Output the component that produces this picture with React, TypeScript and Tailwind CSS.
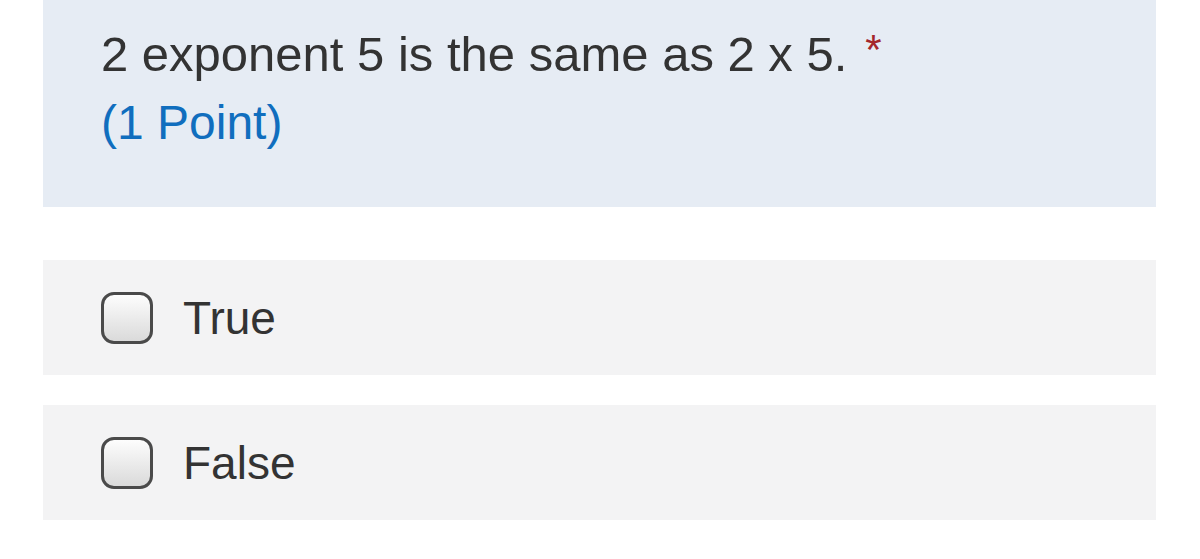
const OPTIONS = ["True", "False"];

function Box() {
  return (
    <span className="block w-[52px] h-[52px] shrink-0 rounded-[13px] border-[3px] border-[#4a4a4a] bg-gradient-to-b from-[#fdfdfd] to-[#dadada]" />
  );
}

export default function App() {
  return (
    <main className="min-h-screen bg-white px-[43px] pr-[44px] font-['Liberation_Sans',Arial,sans-serif]">
      {/* question header */}
      <section className="h-[207px] bg-[#e6ecf4] pl-[58px] pt-[21px]">
        <div className="text-[49px] leading-[66px] text-[#333333]">
          2 exponent 5 is the same as 2 x 5.
          <span className="relative top-[-7px] ml-[18px] text-[42px] text-[#a4262c]">*</span>
        </div>
        <div className="text-[48px] leading-[66px] text-[#106ebe]">(1 Point)</div>
      </section>

      {/* choices */}
      <div className="mt-[53px] flex flex-col gap-[30px]">
        {OPTIONS.map((o) => (
          <label key={o} className="flex h-[115px] items-center gap-[30px] bg-[#f3f3f4] pl-[58px]">
            <Box />
            <span className="text-[46px] leading-none text-[#333333]">{o}</span>
          </label>
        ))}
      </div>
    </main>
  );
}
